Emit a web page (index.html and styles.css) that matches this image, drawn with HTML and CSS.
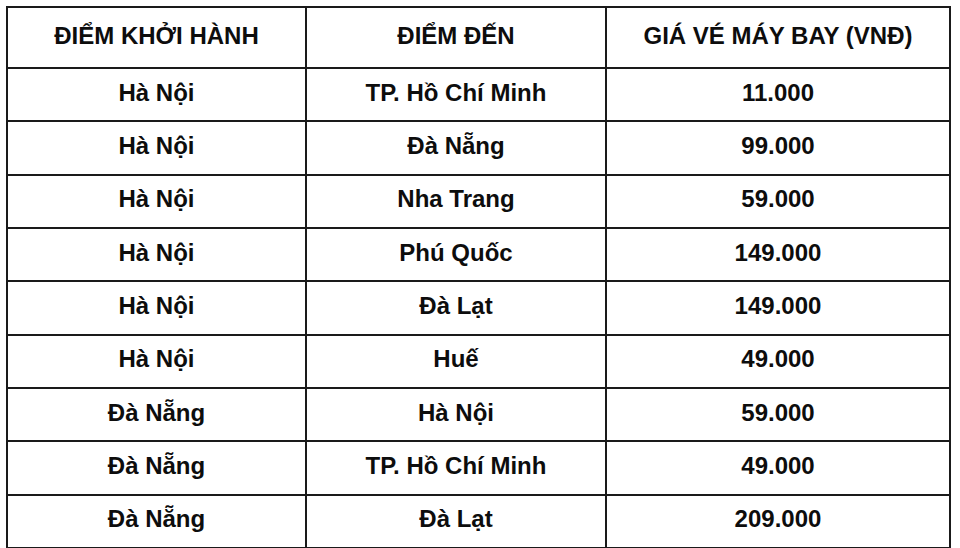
FILE: index.html
```html
<!DOCTYPE html>
<html lang="vi">
<head>
<meta charset="utf-8">
<link rel="stylesheet" href="styles.css">
</head>
<body>
<table class="fares">
  <colgroup>
    <col class="c1"><col class="c2"><col class="c3">
  </colgroup>
  <thead>
    <tr class="head"><th>ĐIỂM KHỞI HÀNH</th><th>ĐIỂM ĐẾN</th><th>GIÁ VÉ MÁY BAY (VNĐ)</th></tr>
  </thead>
  <tbody>
    <tr><td>Hà Nội</td><td>TP. Hồ Chí Minh</td><td>11.000</td></tr>
    <tr><td>Hà Nội</td><td>Đà Nẵng</td><td>99.000</td></tr>
    <tr><td>Hà Nội</td><td>Nha Trang</td><td>59.000</td></tr>
    <tr><td>Hà Nội</td><td>Phú Quốc</td><td>149.000</td></tr>
    <tr><td>Hà Nội</td><td>Đà Lạt</td><td>149.000</td></tr>
    <tr><td>Hà Nội</td><td>Huế</td><td>49.000</td></tr>
    <tr><td>Đà Nẵng</td><td>Hà Nội</td><td>59.000</td></tr>
    <tr><td>Đà Nẵng</td><td>TP. Hồ Chí Minh</td><td>49.000</td></tr>
    <tr><td>Đà Nẵng</td><td>Đà Lạt</td><td>209.000</td></tr>
  </tbody>
</table>
</body>
</html>
```

FILE: styles.css
```css
html, body {
  margin: 0;
  background: #fff;
}
body {
  padding: 6px 0 0 6px;
  font-family: "Liberation Sans", Arial, sans-serif;
  color: #0d0d0d;
  overflow: hidden;
}
.fares {
  border-collapse: collapse;
  table-layout: fixed;
  width: 945px;
  border: 2px solid #1a1a1a;
}
.c1 { width: 299px; }
.c2 { width: 300px; }
.c3 { width: 344px; }
.fares th, .fares td {
  border: 2px solid #1a1a1a;
  text-align: center;
  vertical-align: middle;
  font-weight: bold;
  font-size: 24px;
  padding: 0 0 4px;
  line-height: 1;
}
.fares .head th {
  height: 55px;
}
.fares td {
  height: 47.33px;
}
```
